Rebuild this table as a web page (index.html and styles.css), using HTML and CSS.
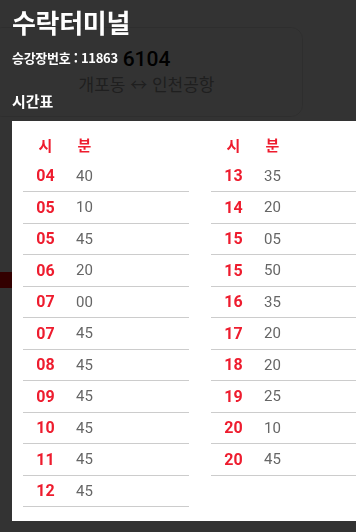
FILE: index.html
```html
<!DOCTYPE html>
<html lang="ko">
<head>
<meta charset="utf-8">
<title>수락터미널 시간표</title>
<link rel="stylesheet" href="styles.css">
</head>
<body>
<div class="page">
  <div class="route-card">
    <div class="route-no">6104</div>
    <div class="route-path">개포동 ↔ 인천공항</div>
  </div>
  <div class="marker"></div>
</div>
<div class="overlay"></div>
<div class="modal">
  <h1 class="stop-name">수락터미널</h1>
  <p class="stop-id">승강장번호 : 11863</p>
  <h2 class="section-title">시간표</h2>
  <div class="panel">
    <div class="tt-col">
      <div class="tt-row tt-head"><span class="h">시</span><span class="m">분</span></div>
      <div class="tt-row"><span class="h">04</span><span class="m">40</span></div>
      <div class="tt-row"><span class="h">05</span><span class="m">10</span></div>
      <div class="tt-row"><span class="h">05</span><span class="m">45</span></div>
      <div class="tt-row"><span class="h">06</span><span class="m">20</span></div>
      <div class="tt-row"><span class="h">07</span><span class="m">00</span></div>
      <div class="tt-row"><span class="h">07</span><span class="m">45</span></div>
      <div class="tt-row"><span class="h">08</span><span class="m">45</span></div>
      <div class="tt-row"><span class="h">09</span><span class="m">45</span></div>
      <div class="tt-row"><span class="h">10</span><span class="m">45</span></div>
      <div class="tt-row"><span class="h">11</span><span class="m">45</span></div>
      <div class="tt-row"><span class="h">12</span><span class="m">45</span></div>
    </div>
    <div class="tt-col">
      <div class="tt-row tt-head"><span class="h">시</span><span class="m">분</span></div>
      <div class="tt-row"><span class="h">13</span><span class="m">35</span></div>
      <div class="tt-row"><span class="h">14</span><span class="m">20</span></div>
      <div class="tt-row"><span class="h">15</span><span class="m">05</span></div>
      <div class="tt-row"><span class="h">15</span><span class="m">50</span></div>
      <div class="tt-row"><span class="h">16</span><span class="m">35</span></div>
      <div class="tt-row"><span class="h">17</span><span class="m">20</span></div>
      <div class="tt-row"><span class="h">18</span><span class="m">20</span></div>
      <div class="tt-row"><span class="h">19</span><span class="m">25</span></div>
      <div class="tt-row"><span class="h">20</span><span class="m">10</span></div>
      <div class="tt-row"><span class="h">20</span><span class="m">45</span></div>
    </div>
  </div>
</div>
</body>
</html>
```
FILE: styles.css
```css
* { box-sizing: border-box; }
html, body {
  margin: 0;
  padding: 0;
  width: 356px;
  height: 532px;
  overflow: hidden;
  background: #fff;
  font-family: "Roboto", "Noto Sans CJK KR", sans-serif;
}
.page {
  display: flex;
  flex-direction: column;
  padding-top: 27px;
}
.route-card {
  margin-left: -10px;
  width: 313px;
  height: 90px;
  border: 1px solid #e6e6e6;
  border-radius: 12px;
  display: flex;
  flex-direction: column;
  align-items: center;
  padding-top: 18px;
}
.route-no {
  font-size: 21px;
  font-weight: 500;
  color: #000;
  line-height: 26px;
}
.route-path {
  font-family: "Noto Sans CJK KR", sans-serif;
  font-size: 17px;
  font-weight: 400;
  color: #999;
  line-height: 24px;
  margin-top: 0;
}
.marker {
  margin-top: 155px;
  width: 12px;
  height: 16px;
  background: #ff0000;
}
.overlay {
  position: fixed;
  inset: 0;
  background: rgba(0, 0, 0, 0.8);
}
.modal {
  position: fixed;
  inset: 0;
  padding: 4px 0 0 12px;
  display: flex;
  flex-direction: column;
  font-family: "Noto Sans CJK KR", sans-serif;
}
.stop-name {
  margin: 0;
  font-size: 26px;
  font-weight: 700;
  line-height: 36px;
  color: #fff;
  letter-spacing: -0.3px;
}
.stop-id {
  margin: 8px 0 0;
  font-size: 13px;
  font-weight: 700;
  line-height: 20px;
  color: #fff;
  letter-spacing: -0.3px;
}
.section-title {
  margin: 22px 0 0;
  font-size: 15px;
  font-weight: 700;
  line-height: 22px;
  color: #fff;
}
.panel {
  margin-top: 9px;
  width: 400px;
  height: 400px;
  background: #fff;
  padding: 8px 0 0 11px;
  display: flex;
  gap: 22px;
  align-items: flex-start;
}
.tt-col {
  width: 166px;
  display: flex;
  flex-direction: column;
}
.tt-row {
  height: 31.5px;
  display: grid;
  grid-template-columns: 45px 33px 1fr;
  align-items: center;
  border-bottom: 1px solid #cccccc;
}
.tt-row.tt-head {
  border-bottom: none;
}
.h {
  text-align: center;
  color: #ee1c2e;
  font-family: "Roboto", "Noto Sans CJK KR", sans-serif;
  font-weight: 700;
  font-size: 16px;
}
.m {
  text-align: center;
  color: #666;
  font-family: "Roboto", "Noto Sans CJK KR", sans-serif;
  font-size: 15px;
}
.tt-head .h, .tt-head .m {
  font-family: "Noto Sans CJK KR", sans-serif;
  font-weight: 700;
  font-size: 15px;
  color: #ee1c2e;
}
```
